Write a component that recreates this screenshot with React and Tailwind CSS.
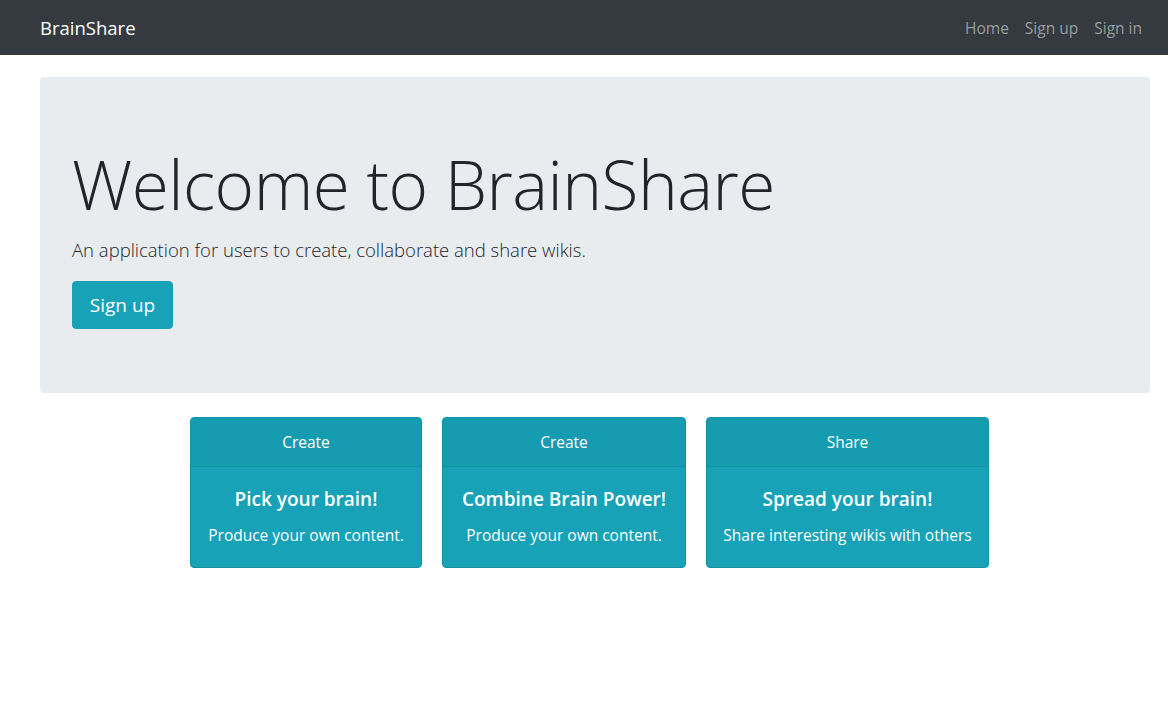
import React from 'react';

const cards = [
  { header: 'Create', title: 'Pick your brain!', text: 'Produce your own content.', width: 'w-[232px]' },
  { header: 'Create', title: 'Combine Brain Power!', text: 'Produce your own content.', width: 'w-[244px]' },
  { header: 'Share', title: 'Spread your brain!', text: 'Share interesting wikis with others', width: 'w-[283px]' },
];

function Navbar() {
  return (
    <nav className="flex items-center justify-between h-[55px] bg-[#343a40] pl-[40px] pr-[18px]">
      <a className="text-[18.5px] leading-[30px] text-white">BrainShare</a>
      <div className="flex items-center">
        {['Home', 'Sign up', 'Sign in'].map((label) => (
          <a key={label} className="px-2 py-2 text-[15.5px] leading-6 text-[#9a9c9f]">
            {label}
          </a>
        ))}
      </div>
    </nav>
  );
}

function Card({ header, title, text, width }) {
  return (
    <div className={`${width} flex flex-col rounded border border-[#1393a6] bg-[#17a2b8] text-white`}>
      <div className="py-3 px-1 text-center text-[15.5px] leading-6 bg-[#169cb1] border-b border-[#1490a4] rounded-t">
        {header}
      </div>
      <div className="py-5 px-1 text-center whitespace-nowrap">
        <h5 className="mb-3 text-[19px] leading-6 font-semibold">{title}</h5>
        <p className="text-[15.5px] leading-6">{text}</p>
      </div>
    </div>
  );
}

export default function App() {
  return (
    <div className="min-h-[710px] bg-white text-[#212529]" style={{ fontFamily: '"Open Sans", "Noto Sans", sans-serif' }}>
      <Navbar />
      <div className="ml-[40px] mr-[18px] mt-[22px] mb-[24px] rounded bg-[#e9ecef] px-8 py-16">
        <h1 className="mb-2 text-[67.5px] leading-[86px] font-light tracking-[-0.5px] text-[#212529]">
          Welcome to BrainShare
        </h1>
        <p className="mb-4 text-[18.5px] leading-[30px] font-light text-[#212529]">
          An application for users to create, collaborate and share wikis.
        </p>
        <button className="h-[48px] w-[101px] rounded bg-[#17a2b8] text-[19px] text-white border border-[#17a2b8]">
          Sign up
        </button>
      </div>
      <div className="flex gap-[20px] pl-[190px]">
        {cards.map((c, i) => (
          <Card key={i} {...c} />
        ))}
      </div>
    </div>
  );
}
